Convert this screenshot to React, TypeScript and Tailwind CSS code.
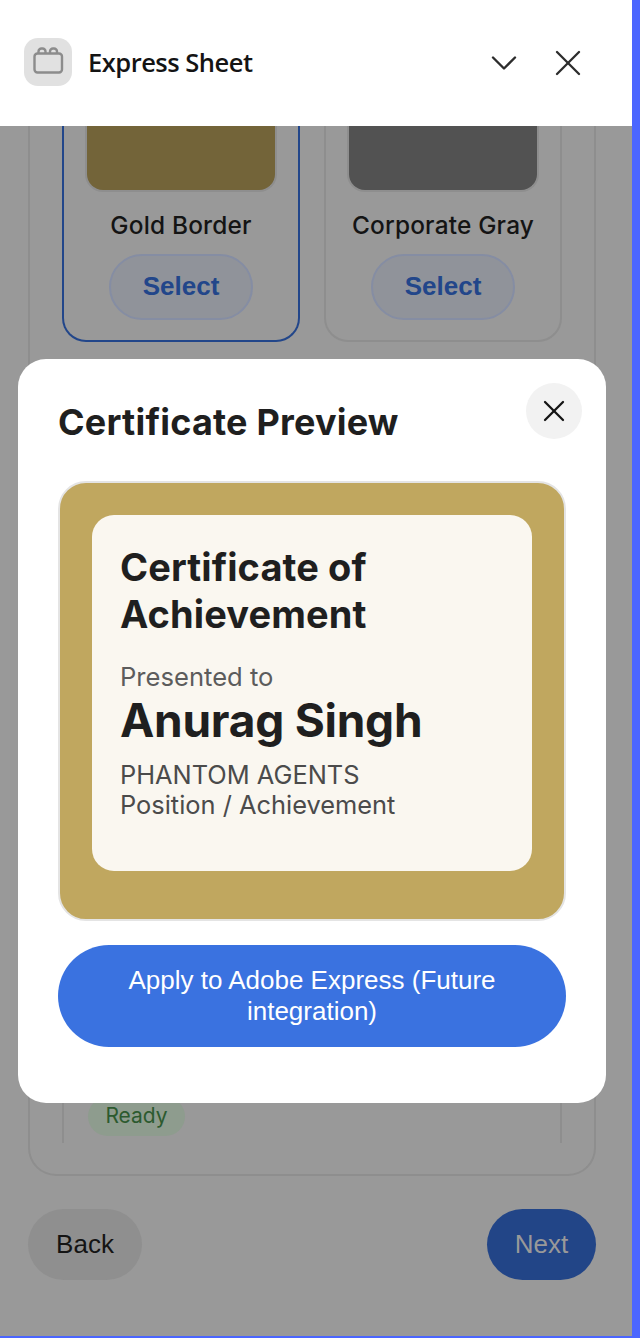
import { ChevronDown, X } from 'lucide-react';

const inter = "font-['Inter',sans-serif]";
const arial = "font-['Liberation_Sans',Arial,sans-serif]";

function TemplateCard({ name, swatch, active }: { name: string; swatch: string; active?: boolean }) {
  return (
    <div className={`w-[238px] h-[216px] rounded-b-[24px] flex flex-col items-center justify-end pb-[20px] border-2 border-t-0 ${active ? 'border-[#22468a]' : 'border-[#8e8e8e]'}`}>
      <div className={`w-[192px] h-[66px] rounded-b-[18px] border-2 border-t-0 border-[#8e8e8e] ${swatch}`} />
      <div className={`${inter} mt-[18px] text-[24.4px] leading-[30px] font-medium tracking-[0.2px] text-[#141414]`}>{name}</div>
      <button className={`${arial} mt-[14px] w-[144px] h-[67px] rounded-full border-2 border-[#858da3] bg-[#90939a] text-[26px] font-bold text-[#22468a]`}>
        Select
      </button>
    </div>
  );
}

function Backdrop() {
  return (
    <div className="h-[1210px] bg-[#999999] pl-[28px] pr-[36px] overflow-hidden">
      <div className="h-[1050px] border-2 border-t-0 border-[#8e8e8e] rounded-b-[28px] px-[32px] flex flex-col">
        <div className="flex justify-between">
          <TemplateCard name="Gold Border" swatch="bg-[#736439]" active />
          <TemplateCard name="Corporate Gray" swatch="bg-[#525252]" />
        </div>
        <div className="mt-[748px] h-[53px] border-x-2 border-[#8e8e8e] pl-[24px]">
          <div className={`${inter} mt-[7px] h-[39px] w-[97px] rounded-full bg-[#8e9c8e] text-[21px] leading-[38px] text-center text-[#2c5a2f]`}>Ready</div>
        </div>
      </div>
      <div className="mt-[33px] flex justify-between">
        <button className={`${arial} w-[114px] h-[71px] rounded-full bg-[#8f8f8f] text-[26px] text-[#141414]`}>Back</button>
        <button className={`${arial} w-[109px] h-[71px] rounded-full bg-[#224587] text-[26px] text-[#999999]`}>Next</button>
      </div>
    </div>
  );
}

function PreviewModal() {
  return (
    <div className="absolute left-[18px] top-[359px] w-[588px] h-[744px] rounded-[28px] bg-white px-[40px] pt-[24px]">
      <button className="absolute right-[24px] top-[24px] w-[56px] h-[56px] rounded-full bg-[#f2f2f2] flex items-center justify-center">
        <X size={36} strokeWidth={1.5} color="#141414" />
      </button>
      <h2 className={`${inter} mt-[17px] text-[36px] leading-[44px] font-bold tracking-[0.2px] text-[#1f1f1f]`}>Certificate Preview</h2>
      <div className="mt-[37px] h-[440px] rounded-[28px] border-2 border-[#e4e4e4] bg-[#c0a75f] p-[32px]">
        <div className={`${inter} h-[356px] rounded-[22px] bg-[#faf7f0] px-[28px] pt-[29px]`}>
          <div className="text-[38px] leading-[47px] font-bold tracking-[0.1px] text-[#1f1f1f]">Certificate of<br />Achievement</div>
          <div className="mt-[24px] text-[25.6px] leading-[30px] text-[#5c5c5c]">Presented to</div>
          <div className="text-[46px] leading-[56px] font-bold tracking-[-0.25px] text-[#1f1f1f]">Anurag Singh</div>
          <div className="mt-[12px] text-[25.4px] leading-[30px] text-[#4b4b4b]">PHANTOM AGENTS<br />Position / Achievement</div>
        </div>
      </div>
      <button className={`${arial} mt-[24px] w-full h-[102px] rounded-full bg-[#3a72e0] px-[50px] text-[26px] leading-[31px] text-white`}>
        Apply to Adobe Express (Future integration)
      </button>
    </div>
  );
}

export default function App() {
  return (
    <div className="relative w-[640px] h-[1338px] overflow-hidden flex flex-col bg-[#4b66ff]">
      <div className="w-[632px]">
        <header className="h-[126px] bg-white flex items-center pl-[24px] pr-[42px]">
          <div className="w-[48px] h-[48px] mb-[2px] rounded-[14px] bg-[#e1e1e1]">
            <svg width="48" height="48" viewBox="0 0 48 48" fill="none" stroke="#8c8c8c" strokeWidth="2.4">
              <rect x="10.5" y="15.5" width="27.5" height="19" rx="3" />
              <path d="M14.5 15.5v-2a3 3 0 0 1 3-3h1a3 3 0 0 1 3 3v2M26 15.5v-2a3 3 0 0 1 3-3h1a3 3 0 0 1 3 3v2" />
            </svg>
          </div>
          <div className="ml-[16px] -mt-[1px] font-['Open_Sans',sans-serif] text-[25.5px] font-semibold tracking-[-0.5px] text-[#141414]">Express Sheet</div>
          <div className="ml-auto flex items-center gap-[20px]">
            <ChevronDown size={44} strokeWidth={1.3} color="#2c2c2c" />
            <X size={44} strokeWidth={1.3} color="#2c2c2c" />
          </div>
        </header>
        <Backdrop />
      </div>
      <PreviewModal />
    </div>
  );
}
